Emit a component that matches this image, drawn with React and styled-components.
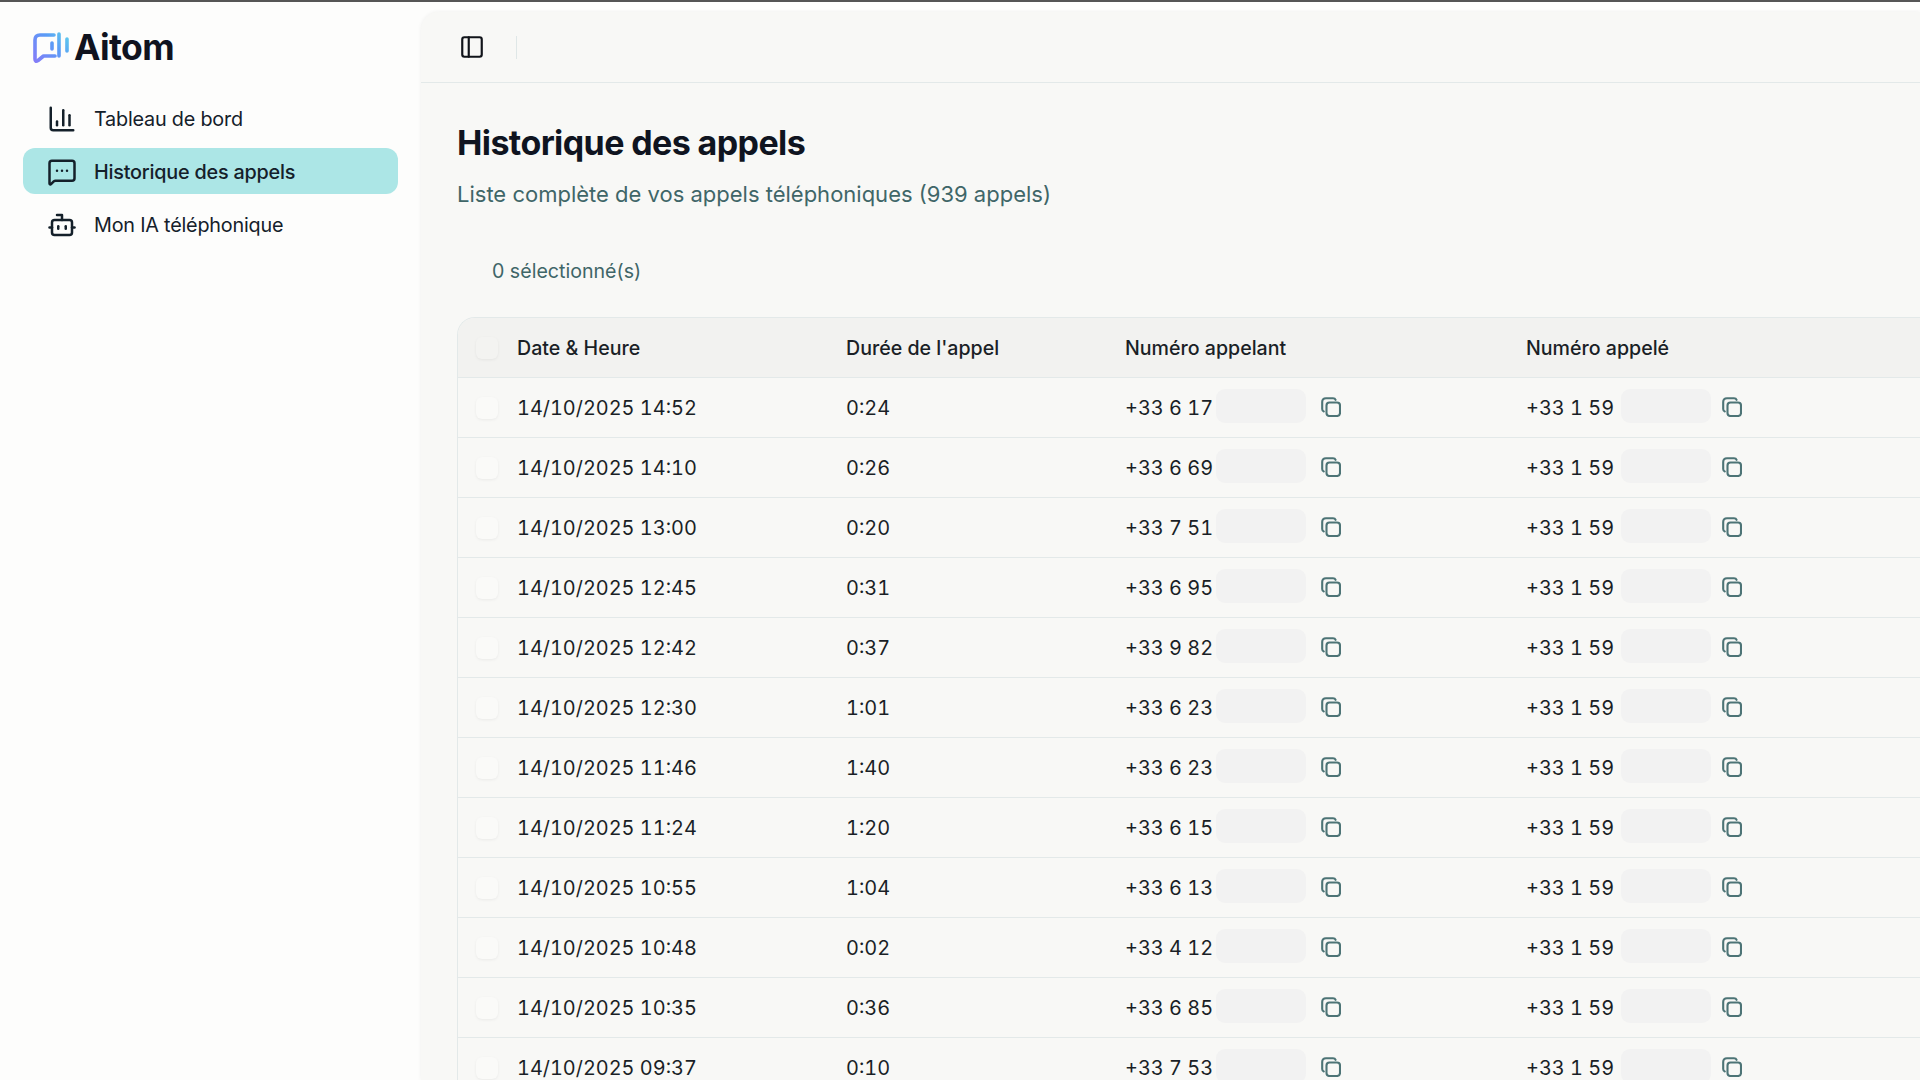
import React from 'react';
import styled, { createGlobalStyle } from 'styled-components';
import { ChartColumn, MessageSquareMore, Bot, PanelLeft } from 'lucide-react';

const Global = createGlobalStyle`
html, body { margin: 0; padding: 0; height: 100%; overflow: hidden; background: #fdfdfc; }
body { font-family: "Inter", "Liberation Sans", sans-serif; color: #11141a; }
#root { height: 100%; }
`;

const Page = styled.div`
display: flex;
height: 100vh;
border-top: 2px solid #555;
box-sizing: border-box;
overflow: hidden;
`;
const Sidebar = styled.aside`
width: 421px;
flex-shrink: 0;
padding: 0 23px;
box-sizing: border-box;
`;
const Brand = styled.div`
display: flex;
align-items: center;
gap: 2px;
height: 66px;
margin: 0 0 0 9px;
padding-top: 25px;
box-sizing: border-box;
`;
const BrandName = styled.span`
font-size: 35.5px;
font-weight: 700;
letter-spacing: -0.6px;
color: #10131f;
`;
const Nav = styled.nav`
display: flex;
flex-direction: column;
gap: 7px;
margin-top: 27px;
`;
const NavItem = styled.a`
display: flex;
align-items: center;
gap: 17px;
height: 46px;
padding-left: 24px;
padding-top: 1px;
box-sizing: border-box;
border-radius: 12px;
font-size: 19.8px;
font-weight: ${(props) => (props.$active ? 500 : 400)};
background: ${(props) => (props.$active ? '#ace6e6' : 'transparent')};
color: #14202a;
letter-spacing: -0.2px;
`;
const Main = styled.main`
flex: 1;
min-width: 0;
margin-top: 10px;
background: #f8f8f6;
border-top-left-radius: 18px;
box-shadow: 0 0 4px rgba(0, 0, 0, 0.06);
`;
const TopBar = styled.header`
display: flex;
align-items: center;
height: 71px;
padding-left: 38px;
border-bottom: 1.5px solid #e3e9e9;
box-sizing: border-box;
`;
const Divider = styled.span`
width: 1px;
height: 23px;
margin-left: 31px;
background: #dfe7e7;
`;
const Content = styled.div`
padding: 0 0 0 36px;
`;
const Title = styled.h1`
margin: 39px 0 0;
font-size: 34px;
line-height: 42px;
font-weight: 700;
letter-spacing: -0.6px;
color: #0f1420;
`;
const Subtitle = styled.p`
margin: 17px 0 0;
font-size: 22px;
line-height: 26px;
color: #3f6668;
`;
const Selected = styled.div`
margin: 51px 0 0 35px;
font-size: 19.6px;
line-height: 26px;
color: #3f6668;
`;
const Table = styled.div`
margin: 33px -40px 0 0;
border: 1.5px solid #e3e9e9;
border-right: 0;
border-radius: 18px 0 0 0;
overflow: hidden;
`;
const Row = styled.div`
display: grid;
grid-template-columns: 59px 329px 279px 401px 1fr;
align-items: center;
height: 60px;
box-sizing: border-box;
border-bottom: 1.5px solid #e3e9e9;
background: ${(props) => (props.$head ? '#f2f2f0' : 'transparent')};
font-size: ${(props) => (props.$head ? '19.6px' : '19.9px')};
font-weight: ${(props) => (props.$head ? 500 : 400)};
font-variant-numeric: tabular-nums;
color: #1a1f26;
`;
const Check = styled.span`
display: block;
width: 22px;
height: 22px;
margin-left: 18px;
border-radius: 6px;
background: ${(props) => (props.$head ? '#f3f3f1' : '#fafaf8')};
box-shadow: 0 1px 3px rgba(0, 0, 0, 0.06);
`;
const Phone = styled.div`
display: flex;
align-items: center;
`;
const PhoneText = styled.span`
width: 91px;
flex-shrink: 0;
`;
const Masked = styled.span`
display: block;
width: 90px;
height: 34px;
margin-top: -3px;
margin-left: ${(props) => props.$shift}px;
border-radius: 9px;
background: #f2f2f2;
`;
const CopyGlyph = styled.svg`
flex-shrink: 0;
margin-top: -2px;
margin-left: ${(props) => 15 - props.$shift}px;
color: #4d7476;
`;

const calls = [
  ['14/10/2025 14:52', '0:24', '+33 6 17'],
  ['14/10/2025 14:10', '0:26', '+33 6 69'],
  ['14/10/2025 13:00', '0:20', '+33 7 51'],
  ['14/10/2025 12:45', '0:31', '+33 6 95'],
  ['14/10/2025 12:42', '0:37', '+33 9 82'],
  ['14/10/2025 12:30', '1:01', '+33 6 23'],
  ['14/10/2025 11:46', '1:40', '+33 6 23'],
  ['14/10/2025 11:24', '1:20', '+33 6 15'],
  ['14/10/2025 10:55', '1:04', '+33 6 13'],
  ['14/10/2025 10:48', '0:02', '+33 4 12'],
  ['14/10/2025 10:35', '0:36', '+33 6 85'],
  ['14/10/2025 09:37', '0:10', '+33 7 53'],
];

const Logo = () => (
  <svg width="40" height="32" viewBox="0 0 40 32" fill="none">
    <defs>
      <linearGradient id="logoGrad" x1="0" y1="32" x2="38" y2="0" gradientUnits="userSpaceOnUse">
        <stop offset="0" stopColor="#8a78f8" />
        <stop offset="0.6" stopColor="#5a9cf6" />
        <stop offset="1" stopColor="#5fd8ea" />
      </linearGradient>
    </defs>
    <path d="M22 3H8Q3 3 3 8V27Q3 30.5 6 28.5L11.5 24H23" stroke="url(#logoGrad)" strokeWidth="3.6" strokeLinecap="round" strokeLinejoin="round" />
    <path d="M20 11V17M27 2V24M35 7V19" stroke="url(#logoGrad)" strokeWidth="3.6" strokeLinecap="round" />
  </svg>
);

const PhoneCell = ({ number, shift = 0 }) => (
  <Phone>
    <PhoneText>{number}</PhoneText>
    <Masked $shift={shift} />
    <CopyGlyph $shift={shift} width="20" height="20" viewBox="0 0 20 20" fill="none" stroke="currentColor" strokeWidth="2.1">
      <rect x="5.5" y="5.5" width="13.5" height="13.5" rx="3" />
      <path d="M2.8 14.5Q1.2 14 1.2 12V5Q1.2 1.2 5 1.2H12Q14 1.2 14.6 2.8" strokeLinecap="round" />
    </CopyGlyph>
  </Phone>
);

export default function App() {
  return (
    <Page>
      <Global />
      <Sidebar>
        <Brand>
          <Logo />
          <BrandName>Aitom</BrandName>
        </Brand>
        <Nav>
          <NavItem><ChartColumn size={30} strokeWidth={2} />Tableau de bord</NavItem>
          <NavItem $active><MessageSquareMore size={30} strokeWidth={2} />Historique des appels</NavItem>
          <NavItem><Bot size={30} strokeWidth={2} />Mon IA téléphonique</NavItem>
        </Nav>
      </Sidebar>
      <Main>
        <TopBar>
          <PanelLeft size={26} strokeWidth={2} />
          <Divider />
        </TopBar>
        <Content>
          <Title>Historique des appels</Title>
          <Subtitle>Liste complète de vos appels téléphoniques (939 appels)</Subtitle>
          <Selected>0 sélectionné(s)</Selected>
          <Table>
            <Row $head>
              <Check $head />
              <span>Date &amp; Heure</span>
              <span>Durée de l'appel</span>
              <span>Numéro appelant</span>
              <span>Numéro appelé</span>
            </Row>
            {calls.map((call) => (
              <Row key={call[0]}>
                <Check />
                <span>{call[0]}</span>
                <span>{call[1]}</span>
                <PhoneCell number={call[2]} />
                <PhoneCell number="+33 1 59" shift={4} />
              </Row>
            ))}
          </Table>
        </Content>
      </Main>
    </Page>
  );
}
